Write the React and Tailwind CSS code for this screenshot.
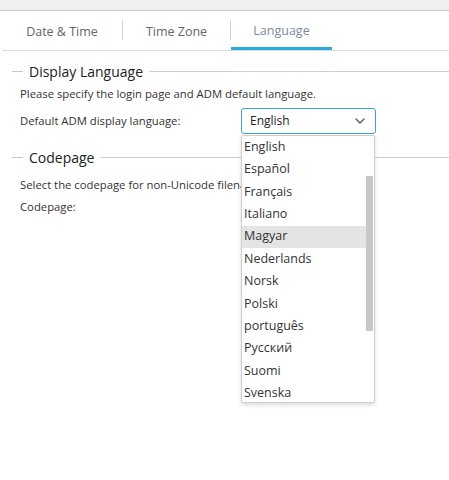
import React from "react";

const languages = [
  "English",
  "Español",
  "Français",
  "Italiano",
  "Magyar",
  "Nederlands",
  "Norsk",
  "Polski",
  "português",
  "Русский",
  "Suomi",
  "Svenska",
];

const Legend = ({ children }) => (
  <div className="flex items-center h-[20px]">
    <div className="w-[11px] ml-[12px] h-px bg-[#c8c8c8]"></div>
    <span className="px-[6px] text-[14px] text-[#222]">{children}</span>
    <div className="flex-1 h-px bg-[#d0d0d0]"></div>
  </div>
);

const App = () => {
  return (
    <div
      className="relative w-[449px] h-[480px] bg-white overflow-hidden text-[#333]"
      style={{ fontFamily: '"Open Sans", "Noto Sans", sans-serif' }}
    >
      {/* Top strip */}
      <div className="h-[11px] bg-[#f0f0f0] border-b border-[#c9c9c9]"></div>

      {/* Tabs */}
      <div className="flex items-end h-[40px] border-b border-[#dcdcdc] ml-[2px] text-[12.5px]">
        <div className="w-[120px] h-full flex items-center justify-center pt-[3px] text-[#666]">Date &amp; Time</div>
        <div className="w-px h-[20px] mb-[10px] bg-[#d5d5d5]"></div>
        <div className="w-[107px] h-full flex items-center justify-center pt-[3px] text-[#666]">Time Zone</div>
        <div className="w-px h-[20px] mb-[10px] bg-[#d5d5d5]"></div>
        <div className="w-[101px] h-full flex items-center justify-center text-[#7d8a99] border-b-[3px] border-[#2aa9e0] pt-[5px]">
          Language
        </div>
      </div>

      {/* Display Language */}
      <div className="mt-[10px]">
        <Legend>Display Language</Legend>
        <p className="ml-[20px] mt-[4px] text-[11.3px] leading-[18px] text-[#333]">
          Please specify the login page and ADM default language.
        </p>
        <div className="flex items-center mt-[5px]">
          <span className="ml-[20px] w-[221px] text-[11.3px] text-[#333]">Default ADM display language:</span>
          <div className="w-[135px] h-[26px] border border-[#3aa6c4] rounded-[3px] flex items-center justify-between pl-[8px] pr-[10px] text-[12px] text-[#222]">
            <span>English</span>
            <svg width="10" height="6" viewBox="0 0 10 6" fill="none">
              <path d="M1 1l4 4 4-4" stroke="#666" strokeWidth="1.6" strokeLinecap="round" strokeLinejoin="round" />
            </svg>
          </div>
        </div>
      </div>

      {/* Codepage */}
      <div className="mt-[13px]">
        <Legend>Codepage</Legend>
        <p className="ml-[20px] mt-[9px] w-[221px] overflow-hidden text-[11.3px] leading-[18px] text-[#333] whitespace-nowrap">
          Select the codepage for non-Unicode filenames.
        </p>
        <p className="ml-[20px] mt-[4px] text-[11.3px] leading-[18px] text-[#333]">Codepage:</p>
      </div>

      {/* Dropdown menu */}
      <div className="absolute left-[241px] top-[135px] w-[134px] h-[268px] bg-white border border-[#cfcfcf] rounded-[2px] shadow-[0_2px_4px_rgba(0,0,0,0.15)] overflow-hidden">
        <div className="absolute right-[1px] top-[40px] w-[7px] h-[155px] bg-[#c8c8c8]"></div>
        <ul>
          {languages.map((lang) => (
            <li
              key={lang}
              className={`h-[22.4px] flex items-center pl-[2px] text-[12.5px] text-[#333] w-[125px] ${
                lang === "Magyar" ? "bg-[#e4e4e4]" : ""
              }`}
            >
              {lang}
            </li>
          ))}
        </ul>
      </div>
    </div>
  );
};

export default App;
